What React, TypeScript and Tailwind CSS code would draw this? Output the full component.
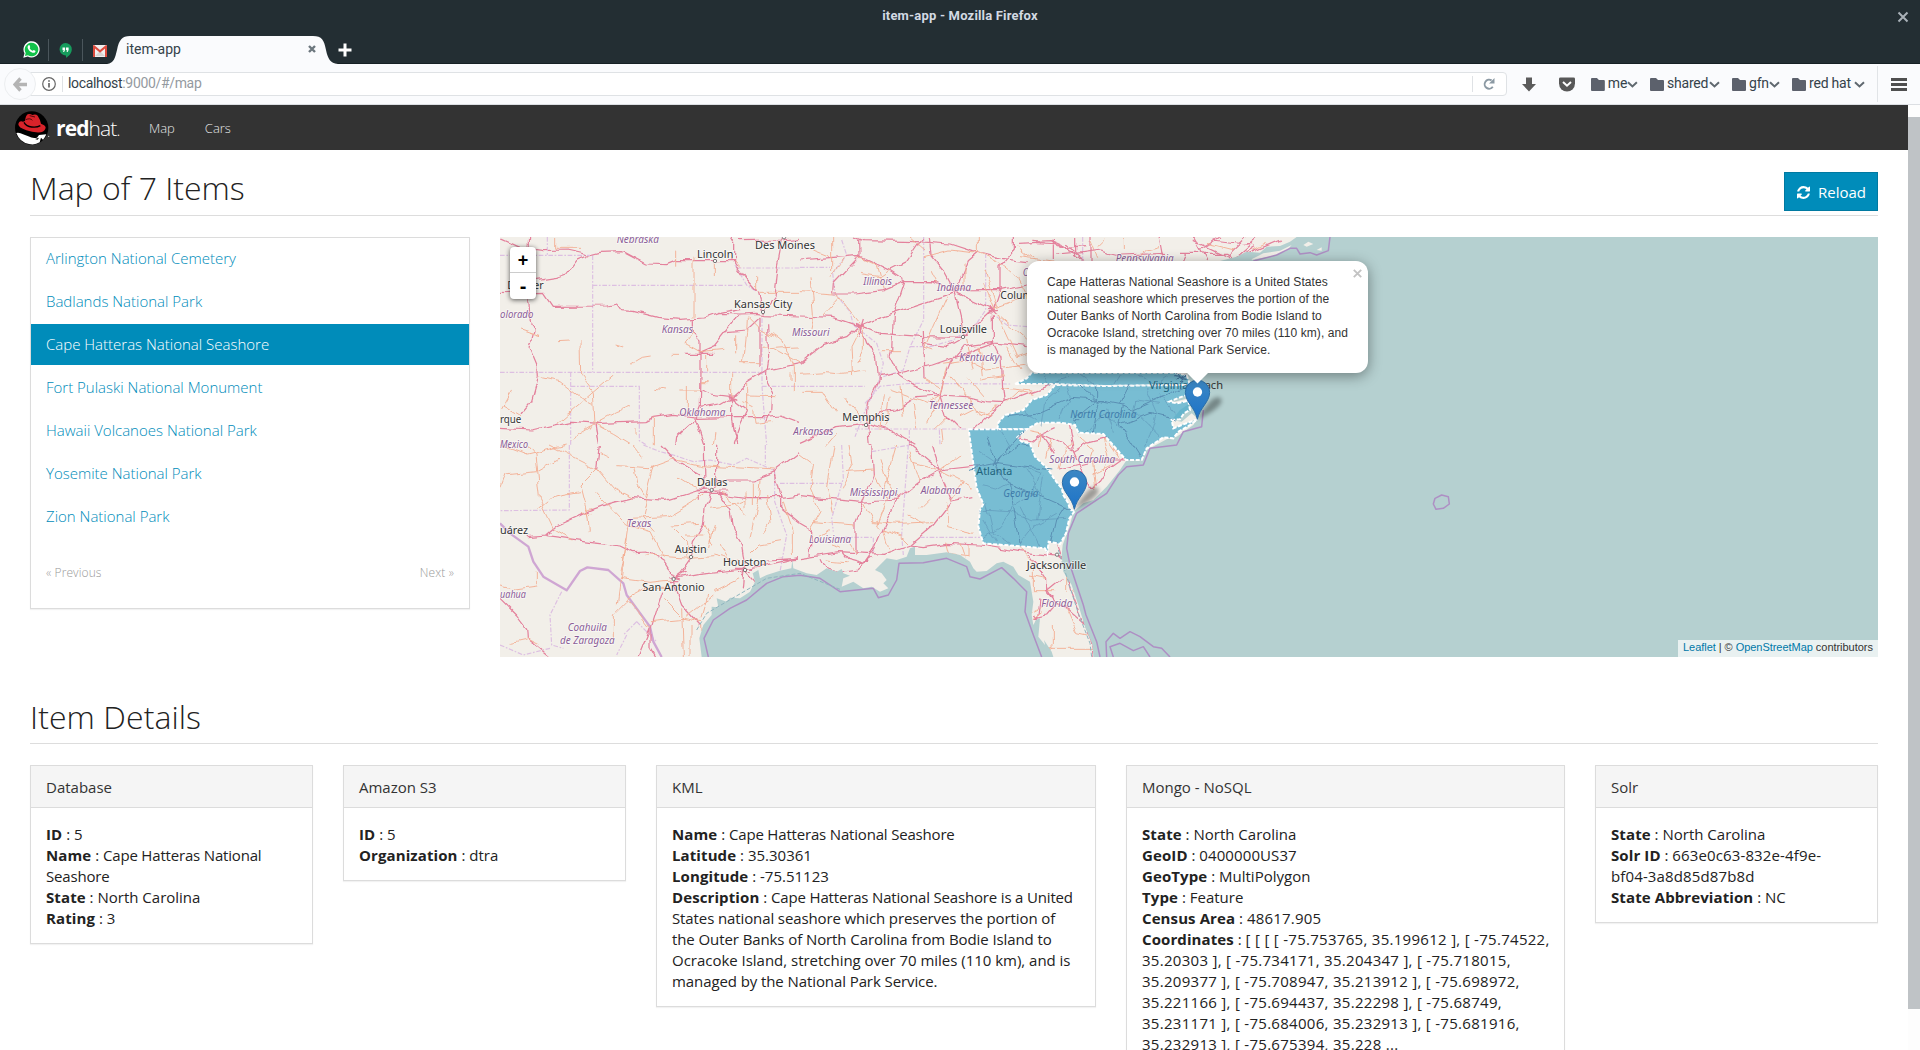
import React from 'react';

/* ---------- browser chrome ---------- */

function WhatsAppIcon() {
  return (
    <svg width="17" height="17" viewBox="0 0 17 17">
      <path d="M0.3 16.7 1.5 12.3A8.1 8.1 0 1 1 4.8 15.5Z" fill="#fff" />
      <path d="M1.9 15.1 2.7 12A6.8 6.8 0 1 1 5 14.3Z" fill="#12c24a" />
      <path d="M5.4 4.4c.5-.5 1-.4 1.200.1l.6 1.500c.1.400-.6.900-.5 1.200.6 1.200 1.500 2 2.800 2.500.4.100.8-.9 1.200-.8l1.600.8c.5.300 0 1.700-.8 2-2.500 1-7-2.700-6.900-5.700 0-.7.400-1.200.8-1.600Z" fill="#fff" />
    </svg>
  );
}

function HangoutsIcon() {
  return (
    <svg width="13" height="15" viewBox="0 0 13 15">
      <path d="M6.500 0a6.300 6.300 0 0 1 6.300 6.200c0 3.800-3 7-5.800 8.600v-2.400A6.200 6.200 0 1 1 6.500 0Z" fill="#169c5d" />
      <path d="M3.500 4.600h2.600v2.500L5.100 9H4l.8-1.800H3.500ZM7 4.600h2.600v2.500L8.600 9H7.500l.8-1.800H7Z" fill="#fff" />
    </svg>
  );
}

function GmailIcon() {
  return (
    <svg width="14" height="12" viewBox="0 0 14 12">
      <rect width="14" height="12" rx="1" fill="#f1efef" />
      <path d="M2 11 7 6l5 5Z" fill="#d8d5d4" />
      <path d="M0 1Q0 0 1 0L7 5 13 0q1 0 1 1v11h-2V3.500L7 7.800 2 3.500V12H0Z" fill="#dd4b3e" />
    </svg>
  );
}

function TitleBar() {
  return (
    <div className="relative flex h-8 w-full items-center justify-center bg-[#232e33] text-[13px] font-bold tracking-[0.180px] text-[#d3dae3]">
      <span>item-app - Mozilla Firefox</span>
      <svg className="absolute right-[11px] top-[11px]" width="12" height="12" viewBox="0 0 12 12">
        <path d="M1.500 1.500 10.500 10.500M10.500 1.500 1.500 10.500" stroke="#a9b1b8" strokeWidth="2" />
      </svg>
    </div>
  );
}

function TabStrip() {
  return (
    <div className="flex h-8 items-start border-b border-[#162024] bg-[#232e33]">
      <div className="flex h-8 w-12 items-center justify-end pr-2 pt-[4px]">
        <div className="pb-0.5"><WhatsAppIcon /></div>
      </div>
      <div className="mt-[7px] flex h-[22px] w-[35px] items-center justify-center border-x border-[#4b565c]">
        <HangoutsIcon />
      </div>
      <div className="ml-[10px] mt-[13px]"><GmailIcon /></div>
      <div className="relative h-8 w-[231px]">
        <svg className="absolute left-0 top-0" width="234" height="32" viewBox="0 0 234 32">
          <path d="M0 32C7 31 8 26 10 18 12 8 15 4 23 4H206C215 4 217 8 219 18 221 27 223 31 231 32Z" fill="#fafbfd" />
        </svg>
        <div className="relative flex items-center pl-[19px] pt-[7px] text-[14px] leading-[20px] text-[#35424a]">
          <span className="w-[182px]">item-app</span>
          <svg width="8" height="8" viewBox="0 0 8 8">
            <path d="M1 1 7 7M7 1 1 7" stroke="#6c777e" strokeWidth="2.400" />
          </svg>
        </div>
      </div>
      <svg className="mt-[11px]" width="14" height="14" viewBox="0 0 14 14">
        <path d="M7 0.500V13.500M0.500 7H13.500" stroke="#fff" strokeWidth="3" />
      </svg>
    </div>
  );
}

function Bookmark({ label, className }: { label: string; className: string }) {
  return (
    <div className={`flex items-center ${className}`}>
      <svg width="14" height="13" viewBox="0 0 14 13">
        <path d="M0 1Q0 0 1 0H6L8 2H13Q14 2 14 3V12Q14 13 13 13H1Q0 13 0 12Z" fill="#5c616c" />
      </svg>
      <span className="ml-[3px] flex-1 whitespace-nowrap pb-[1px] text-[14px] tracking-[-0.200px]">{label}</span>
      <svg width="11" height="7" viewBox="0 0 11 7">
        <path d="M1 1.200 5.500 5.400 10 1.200" fill="none" stroke="#5f686f" strokeWidth="2" />
      </svg>
    </div>
  );
}

function Toolbar() {
  return (
    <div className="flex h-[41px] items-center border-b border-[#dcdfe3] bg-[#fafbfd] pl-1 text-[#35424a]">
      <div className="z-10 flex h-8 w-8 shrink-0 items-center justify-center rounded-full border border-[#eceef0] bg-[#fafbfd]">
        <svg width="14" height="15" viewBox="0 0 14 15">
          <path d="M7.500 1.500 2 7.500 7.500 13.500M2 7.500H14" fill="none" stroke="#b4b4b4" strokeWidth="3.400" />
        </svg>
      </div>
      <div className="-ml-[9px] flex h-6 w-[1480px] items-center rounded-r-sm border border-[#dfe2e5] bg-white pl-[14px]">
        <svg width="14" height="14" viewBox="0 0 14 14">
          <circle cx="7" cy="7" r="6.300" fill="none" stroke="#666" strokeWidth="1.200" />
          <path d="M7 6V10.500M7 3.200V4.700" stroke="#666" strokeWidth="1.700" />
        </svg>
        <div className="ml-[6px] h-4 border-l border-[#dfe2e5]" />
        <span className="ml-[5px] pb-px text-[14px] tracking-[-0.330px]">
          localhost<span className="text-[#949a9f]">:9000/#/map</span>
        </span>
        <div className="ml-auto h-4 border-l border-[#dfe2e5]" />
        <svg className="ml-[10px] mr-[11px]" width="12" height="12" viewBox="0 0 12 12">
          <path d="M8.600 2.400A4.500 4.500 0 1 0 9.800 8.800" fill="none" stroke="#8b99a3" strokeWidth="1.900" />
          <path d="M11.500 0V5.500H6Z" fill="#8b99a3" />
        </svg>
      </div>
      <svg className="ml-[14px]" width="16" height="15" viewBox="0 0 16 15">
        <path d="M5 0.500H11V7H15L8 14.500 1 7H5Z" fill="#5b5b5b" />
      </svg>
      <svg className="ml-[22px]" width="16" height="15" viewBox="0 0 16 15">
        <path d="M0 1.500Q0 .5 1.500 .5H14.500Q16 .5 16 1.500V6.500A8 8 0 0 1 0 6.500Z" fill="#585858" />
        <path d="M4 5 8 8.700 12 5" fill="none" stroke="#fff" strokeWidth="2" />
      </svg>
      <Bookmark label="me" className="ml-4 w-[47px]" />
      <Bookmark label="shared" className="ml-3 w-[70px]" />
      <Bookmark label="gfn" className="ml-3 w-[48px]" />
      <Bookmark label="red hat" className="ml-3 w-[73px]" />
      <div className="ml-3 h-9 border-l border-[#e1e4e7]" />
      <svg className="ml-[13px]" width="16" height="13" viewBox="0 0 16 13">
        <path d="M0 1.500H16M0 6.500H16M0 11.500H16" stroke="#4f4f4f" strokeWidth="3" />
      </svg>
    </div>
  );
}

/* ---------- application navbar ---------- */

function RedHatLogo() {
  return (
    <svg width="35" height="34" viewBox="0 0 105 102">
      <circle cx="50" cy="51" r="50" fill="#000" />
      <path d="M4 66Q14 64 24 70L40 76Q54 84 66 80L72 72 94 70Q90 80 84 86L78 80 74 94Q60 103 42 99Q14 94 4 66Z" fill="#fff" />
      <path d="M50 70 70 70 66 76 56 76ZM60 84 72 80 68 86Z" fill="#000" />
      <path d="M30 30Q32 14 38 10Q46 8 52 12Q62 8 68 14Q76 26 78 38Q90 42 92 48Q92 60 78 64Q56 66 34 58Q10 50 10 40Q12 28 24 32Z" fill="#d8232a" />
      <path d="M27 34Q34 46 50 48Q66 50 76 44" fill="none" stroke="#000" strokeWidth="4" />
      <path d="M32 26Q46 20 52 28M44 14 60 18" fill="none" stroke="#3a0505" strokeWidth="2.500" />
      <circle cx="101" cy="76" r="2" fill="#ccc" />
    </svg>
  );
}

function NavBar() {
  return (
    <nav className="flex h-[45px] items-center bg-[#333] pl-[15px] text-[13px] font-light text-[#e8e8e8]">
      <RedHatLogo />
      <span className="ml-[6px] w-[64px] pt-px text-[21px] leading-none tracking-[-0.900px] text-white">
        <b className="font-bold">red</b>hat<span className="text-[16px]">.</span>
      </span>
      <a className="ml-[29px] pt-[2px]">Map</a>
      <a className="ml-[30px] pt-[2px]">Cars</a>
    </nav>
  );
}

/* ---------- map ---------- */

const PINK = '#e4819c';
const ORANGE = '#f3ae93';

const Roads = ({ d, minor }: { d: string; minor?: boolean }) => (
  <path d={d} fill="none" stroke={minor ? ORANGE : PINK} strokeWidth={minor ? 2.8 : 3.7} strokeLinejoin="round" filter="url(#wander)" />
);
const Border = ({ d }: { d: string }) => (
  <path d={d} fill="none" stroke="#ddbfe2" strokeWidth="3.500" strokeDasharray="14 5 5 5" />
);
const Coast = ({ d }: { d: string }) => (
  <path d={d} fill="none" stroke="#ae8fc4" strokeWidth="4.500" strokeLinejoin="round" />
);

const GEORGIA =
  'M26 208 200 208 172 232 185 245 210 250 225 290 262 325 285 360 305 385 310 405 325 430 330 450 345 452 328 475 318 520 300 552 266 545 262 580 255 565 70 550 55 500 60 450 70 432 50 385Z';
const NORTH_CAROLINA =
  'M112 208 115 188 135 165 190 150 215 120 260 105 285 75 430 78 680 75 690 102 660 112 628 125 650 130 685 122 690 150 672 160 660 178 635 180 640 205 665 195 712 178 690 195 655 215 640 235 610 232 560 265 545 300 498 300 430 222 355 218 345 195 300 188 235 188 200 208Z';
const VIRGINIA = 'M165 72 200 55 215 38 640 38 680 45 690 75 430 78 285 72Z';

type Label = [string, number, number, number];

const cities: Label[] = [
  ['Lincoln', 591, 83, 109],
  ['Des Moines', 765, 57, 180],
  ['Denver', 22, 177, 109],
  ['Kansas City', 702, 235, 175],
  ['Columbus', 1501, 207, 150],
  ['Louisville', 1319, 308, 142],
  ['Memphis', 1027, 573, 141],
  ['rque', 0, 578, 64],
  ['uárez', 0, 911, 84],
  ['Dallas', 591, 769, 91],
  ['Austin', 524, 969, 96],
  ['Houston', 669, 1008, 130],
  ['San Antonio', 427, 1083, 187],
  ['Jacksonville', 1580, 1016, 179],
];

const regions: Label[] = [
  ['Nebraska', 350, 39, 127],
  ['olorado', 0, 264, 100],
  ['Kansas', 485, 308, 94],
  ['Missouri', 876, 318, 113],
  ['Illinois', 1090, 164, 86],
  ['Indiana', 1311, 184, 102],
  ['Ohio', 1568, 138, 60],
  ['Pennsylvania', 1847, 96, 174],
  ['Kentucky', 1378, 394, 120],
  ['Tennessee', 1286, 536, 134],
  ['Oklahoma', 538, 558, 138],
  ['Arkansas', 880, 614, 120],
  ['Mexico', 0, 653, 84],
  ['Texas', 381, 892, 73],
  ['uahua', 0, 1105, 78],
  ['Coahuila', 203, 1203, 118],
  ['de Zaragoza', 180, 1241, 164],
  ['Mississippi', 1049, 797, 143],
  ['Alabama', 1262, 791, 120],
  ['Louisiana', 927, 939, 126],
  ['Florida', 1624, 1132, 93],
  ['South Carolina', 1648, 699, 198],
];

const tintedRegions: Label[] = [
  ['North Carolina', 1711, 563, 198],
  ['Georgia', 1510, 800, 105],
];

function MapText({ items, color, italic }: { items: Label[]; color: string; italic?: boolean }) {
  return (
    <g
      fill={color}
      fontSize={italic ? 32 : 35}
      fontStyle={italic ? 'italic' : 'normal'}
      stroke="#fff"
      strokeOpacity="0.6"
      strokeWidth="5"
      strokeLinejoin="round"
      paintOrder="stroke"
    >
      {items.map(([name, x, y, w]) => (
        <text key={name} x={x} y={y} textLength={w} lengthAdjust="spacingAndGlyphs">
          {name}
        </text>
      ))}
    </g>
  );
}

function Pin() {
  return (
    <g>
      <path d="M343 448Q358 418 388 388Q412 374 416 392Q412 416 343 448Z" fill="#000" opacity="0.350" filter="url(#soft)" />
      <path d="M343 448C336 412 307 396 307 367A36.500 36.500 0 0 1 380 367C380 396 351 412 343 448Z" fill="url(#pin)" stroke="#2b6ea8" strokeWidth="3" />
      <circle cx="343.500" cy="366" r="14" fill="#fff" />
    </g>
  );
}

function MapCanvas() {
  return (
    <svg className="block h-[420px] w-[1378px]" viewBox="0 21 4134 1260" fontFamily='"Noto Sans", "Open Sans", sans-serif'>
      <defs>
        <linearGradient id="pin" x1="0" y1="0" x2="0" y2="1">
          <stop offset="0" stopColor="#3c88c4" />
          <stop offset="1" stopColor="#1c72c8" />
        </linearGradient>
        <filter id="soft" x="-50%" y="-50%" width="200%" height="200%">
          <feGaussianBlur stdDeviation="6" />
        </filter>
        <filter id="wander" x="-2%" y="-2%" width="104%" height="104%">
          <feTurbulence type="fractalNoise" baseFrequency="0.022" numOctaves="2" seed="4" />
          <feDisplacementMap in="SourceGraphic" scale="24" xChannelSelector="R" yChannelSelector="G" />
        </filter>
      </defs>
      <rect y="21" width="4134" height="1260" fill="#f2efe9" />

      {/* Midwest and the plains */}
      <Border d="M0 76H270M142 21V76M278 76V427M278 166H730M0 427H795M212 427V645M212 469H418V632L440 645M786 265V465M705 105 740 165 770 185M710 114H900M786 469H900M786 469 800 645" />
      <Roads d="M0 25 60 52 130 62 200 60 268 75 300 67 370 65 440 102 500 104 530 92 704 92 M268 75 230 92 200 132 170 142 108 152 M86 21 84 60 M0 190 60 192 133 190 160 229 320 228 347 222 362 242 400 244 470 262 540 268 610 264 650 250 715 252 770 250 790 254 900 258 M690 21 704 45 704 100 740 150 772 186 790 250 M720 32 850 30 900 25 M850 30 835 110 825 200 790 246 M86 205 90 270 103 300 90 350 113 405 115 440 95 512 60 555 M580 265 580 310 600 330 600 430 598 530 580 575 530 620 527 645 M600 367 640 350 715 255 M680 305 740 300 780 262 M780 260 780 410 M803 280 806 395 800 430 800 460 815 490 812 545 800 575 M0 595 97 600 170 584 215 574 300 580 435 575 460 562 520 553 590 562 690 560 800 560 840 555 900 577 M288 580 298 645 M695 500 630 492 600 480 M695 500 740 460 800 422 900 400 M695 505 660 525 600 535 M695 505 740 540 M695 505 695 575 710 645 M740 540 720 580 697 645 M585 562 612 645 M550 370 640 370 M655 248 720 235 M685 492 710 492M685 500 712 508M690 490V512M594 360 610 370" />
      <Roads minor d="M170 21V55H240 M530 68V110 M582 80V260 M643 95V138 M704 92 720 110 M770 140V180 M772 187H900 M240 330 242 440 280 490 285 580 M340 435 170 580 M115 440 180 455 245 505 280 523 M290 578 350 545 390 530 M285 580 340 610 390 640 M285 582 215 625 M60 300 120 320 M395 403 430 382 455 378 M535 480H600 M562 465V540 M742 260 740 310 730 400 M745 260 785 300 825 320 850 340 880 410 880 485 M785 355 850 350 900 348 M720 398H780 M600 365 670 358 M620 370V430 M555 340 600 365 M580 310 555 340 M710 310V370 M740 460V540 M740 498 830 500 M695 430V500 M640 645 645 610 M460 562V640 M5 540 35 485 M10 530 60 560 M405 595V620 M350 342 370 348M170 338 210 336M460 475 495 480M820 355 900 400 M870 430V450 M600 455 620 455 M515 373 540 373 M730 515 760 530 765 580 820 575" />

      {/* Ohio valley, Tennessee, Missouri */}
      <g transform="translate(900 0)">
        <Border d="M0 112H90M125 30 140 75 98 130 105 190 150 245 160 285 230 340 250 400 235 460 200 530 165 620M371 21V270L330 350 310 420 250 440M0 469H195M195 520 240 469 330 460 635 462M165 597H680M328 600V645M418 600 420 645M557 70V240L530 280M330 350 390 350 460 330 530 280M590 260 620 285 685 290M848 21V93" />
        <Roads d="M165 21 190 32 350 35 450 42 520 65 600 85 680 95 M179 30 180 80 100 165 98 190 M0 90 60 85 130 80 175 77 230 102 270 122 318 154 400 156 465 185 M370 21 320 95 270 120 M385 21 390 70 430 120 465 185 M0 258 100 262 180 290 250 260 370 220 465 188 M100 192 160 192 250 182 318 154 410 155 M318 154 300 210 280 260 275 360 270 380 M180 285 140 320 75 340 30 375 0 400 M180 290 200 345 230 380 235 450 205 520 200 580 M180 285 240 310 370 320 490 322 580 240 M465 188 480 250 490 322 M490 322 440 350 370 340 M490 350 575 338 680 350 M465 188 580 240 M535 70 505 95 470 185 M580 240 600 180 600 110 640 60 640 21 M465 180 600 178 680 162 M580 250 580 340 600 380 605 470 610 518 M235 440 290 430 400 405 500 370 580 340 M295 430 270 380 M290 430 335 460 420 495 M490 350 450 400 430 450 420 495 M420 495 500 500 560 515 610 518 680 490 760 462 M420 495 350 500 290 540 240 545 200 580 M420 495 440 560 480 600 M610 518 560 560 520 598 M200 580 270 600 340 640 M200 580 110 590 45 620 0 640 M200 580 205 645 M370 300 375 445 M190 270 175 320M165 280 205 295M570 230 590 250M565 242 595 238M450 190H480M485 320 505 315M760 30V90M765 45 800 55 860 50 M768 75 820 70 M700 40 780 45 M790 40 850 90" />
        <Roads minor d="M95 21V120 M30 145 40 250 30 300 M0 185 100 192 M110 190 140 230 180 280 M130 85 90 140 M70 260 120 205 M175 80 230 105 M180 130 240 140 270 120 M0 430 80 425 130 430 200 420 M180 290 150 350 155 440 M190 290 190 360 170 400 M245 362H300 M270 362 M375 80 450 60 535 70 M535 70 600 100 650 140 680 200 M535 70 535 21 M375 60 330 21 M390 120 410 160 M440 200 400 290 375 350 M495 100V180 M555 120 590 230 M550 160 580 235 680 200 M600 260 680 330 M590 250 650 380 680 370 M430 400 500 390 560 420 680 405 M500 330 520 420 M540 350 550 440 M440 410 420 490 M620 350 660 420 M375 445 420 470 M300 470 310 560 M250 490 240 600 M270 480 380 520 420 495 M420 500 380 580 M450 440 500 500 M500 440 560 510 M505 500 540 560 590 530 M540 450 610 440 M620 518 660 480 700 490 M600 470 700 480 M10 490 70 490 110 550 M130 500 180 560 M80 645 110 610 M270 500 260 590 M340 520 350 595 M425 600 430 645 M370 350 400 360 M230 105 250 180 M40 60 90 80 M650 50 700 90 M870 30 890 80 M440 560 400 600M480 560 520 540 570 555" />
      </g>

      {/* Texas and northern Mexico */}
      <g transform="translate(0 645)">
        <Border d="M208 0V195L0 197M430 0 480 20 520 30 580 50 630 45 700 60 740 40 820 75M824 80V170L860 270 840 380M840 115H900M796 0V60M185 440 150 510 155 600 190 610M0 600 70 630 150 610M380 570 350 630M410 530 370 570M410 530 470 590" />
        <path d="M0 235 30 265 85 305 100 350 130 395 200 436 240 378 262 367 325 375 370 415 380 450 450 545 460 590 485 636" fill="none" stroke="#cfa6d3" strokeWidth="7" strokeLinejoin="round" />
        <Roads d="M298 0 290 70 M80 275 140 270 175 240 250 205 330 175 400 158 500 166 590 138 635 135 M140 272 275 290 360 300 400 320 440 318 495 355 520 395 M610 0 612 130 M635 135 615 190 610 240 580 290 575 335 540 385 520 400 M650 0V110L635 135 M635 135 680 150 740 158 840 158 900 150 M640 105H760L820 82 900 20 M650 140 690 200 700 260 725 300 735 370 M520 400 600 385 735 372 820 355 900 338 M520 400 555 380 M520 410 545 480 600 540 M485 440 450 550 415 636 M735 375 730 430 M735 375 770 415 M800 345 900 340 M0 460 50 510 80 550 82 580 150 636 M845 150 845 190 900 235 M824 80 842 150 M450 550V610L465 636 M480 0 520 42 600 90 M590 135H685M595 145H680M595 150V170M505 395 540 405M510 410H535M705 370H760M715 380H755M730 365V390" />
        <Roads minor d="M0 0 80 30 200 0 M80 0 105 30 118 160 160 250 220 285 M0 130 15 90 110 80 180 40 M290 70 340 130 400 160 M290 70 240 120 260 200 265 260 M240 140 160 155 118 190 M150 0 290 70 M400 60 410 110 440 160 430 210 M290 145 380 240 450 260 490 340 M360 400 380 290 390 220 500 215 610 150 M355 62 450 68 520 42 M520 42 600 62 824 75 M535 95 590 130 M460 60 436 155 M355 475 380 280 M360 400 450 412 515 405 M515 240 600 235 M520 250 560 290 560 335 M440 330 570 340 640 335 M610 240 640 300 M640 240 625 310 M630 190 700 180 735 165 M735 145V190 M780 100 775 170 750 280 M800 150 810 230 790 260 M760 110V180 M640 450 550 520 450 530 M640 440 720 400 M620 450 600 520 M545 490 550 636 M570 540V636 M605 540 610 636 M450 545 385 460 440 430 500 430 M340 510 400 450 M340 580 340 510 M0 420 40 430 115 420 M115 420V380 M35 595 80 585 M80 580 120 600 M490 460 550 520 600 530 M400 0 430 40M850 170 880 260 880 330M750 330 780 300 840 290M640 330 720 350M560 270H610M300 20 330 35M420 215 460 260 M260 195 280 190M240 205 280 205M255 190 265 215M660 300 690 350M660 140 740 210" />
      </g>

      {/* Deep south and Florida */}
      <g transform="translate(900 645)">
        <Border d="M0 115H125M125 0 130 100 95 220 100 260M105 277H220V320M325 0 305 270 310 330M360 277H540M215 20 330 0" />
        <Roads d="M0 152 90 163 185 172 240 168 290 165 360 110 420 75 M215 0 220 90 190 172 165 230 165 330 M420 75 395 0 M330 0 420 75 M420 75 540 62 M420 80 455 170 400 240 330 300 M290 165 250 250 220 320 195 355 M455 168 520 155 M0 235 35 255 30 330 M0 338 120 320 250 328 330 300 370 305 440 295 540 300 660 320 780 335 M60 340 75 370 120 382 170 375 195 355 215 340 M125 320 140 340 195 355 M770 290 790 350 815 440 850 530 875 590 880 636 M690 330 740 400 740 440 770 475 740 510 700 520 M770 475 800 490 855 540 M740 440 790 400 M415 65 430 85M410 80 435 72M175 355H205M740 430 760 460 M35 250V270M720 460 710 540M770 330 790 345 M700 510 720 530" />
        <Roads minor d="M0 30 40 60 30 130 60 200 30 250 M100 0 80 120 100 200 M130 80 220 75 M150 0 160 60 130 130 M220 90 260 160 230 240 240 250 M190 175 220 230 300 235 400 230 M240 40 260 110 300 165 M290 0 270 70 250 130 M250 255 310 280 330 300 M330 20 360 110 M340 55 420 75 480 30 M420 75 490 110 450 165 M360 190 390 160 M440 170 440 245 520 265 M480 110 520 130 M320 210 370 235 M165 240 100 235 40 230 M170 330 150 300 M250 255 270 320 M440 290 450 330 510 335 510 300 M480 295 495 340 M660 310 700 350 700 440 M700 440H770 M690 390 740 400 M690 500 750 470 M760 540 760 600 730 636 M755 610 880 610 M800 490 830 560 875 570 M700 600 760 610 M800 390V440 M700 520 725 500 M840 400 820 440M90 260 60 280M120 310 90 300M80 345 140 350" />
      </g>
      <g transform="translate(1380 390)">
        <Roads d="M240 222 220 240 175 230M240 222 290 200 M240 222 340 270 390 385 405 385 M340 270 325 190 M340 275 380 250 440 235 M300 330 420 300 500 300 M405 385 440 330 490 295 M240 222 280 280" />
        <Roads minor d="M205 215 240 222 235 260 M270 240 260 290 M350 225 400 270 390 300 M430 240 445 290 430 330 M400 300 410 385 M400 340 460 310 M300 330 310 280 340 250 M345 370 375 380 M445 250 480 300 M320 390 350 420" />
      </g>

      {/* Northeast corridor */}
      <g transform="translate(1560 0)">
        <Roads d="M0 40 90 35 170 70 240 60 300 75 440 70 M170 21V80L200 93 M210 21V93 M480 70H620L650 90 M515 30 600 70 640 90 720 21 M520 21 560 93 M620 80 680 21 M640 90 780 30 M540 60 600 21 M490 93 500 70M420 21 430 75M580 30 700 45M650 85 705 50" />
        <Roads minor d="M310 21V60 M0 80 100 93 M230 50 250 30 M340 93 380 60 420 50 M560 40 640 60 M700 60 740 40" />
      </g>

      {/* Water */}
      <path
        fill="#b5d0d0"
        d="M605 1281 598 1225 610 1185 635 1155 635 1130 655 1132 650 1105 680 1115 690 1103 720 1105 750 1085 765 1055 758 1030 775 1020 780 1045 800 1035 840 1022 874 1015 877 990 880 1015 900 1022 920 1030 950 1035 980 1015 1010 1025 1025 1017 1030 1030 1050 1037 1030 1045 1025 1070 1060 1055 1090 1075 1115 1070 1140 1085 1165 1075 1150 1060 1160 1050 1145 1030 1125 1020 1145 1000 1160 985 1190 990 1220 980 1230 955 1245 950 1245 975 1280 975 1340 967 1380 975 1410 995 1420 1015 1430 1025 1460 1023 1490 1000 1510 995 1540 1010 1555 1035 1590 1055 1595 1085 1600 1115 1595 1155 1600 1185 1608 1170 1620 1165 1615 1220 1635 1245 1632 1230 1655 1265 1660 1281Z"
      />
      <path
        fill="#b5d0d0"
        d="M1780 1281 1778 1245 1755 1190 1735 1125 1715 1065 1690 1025 1685 975 1688 945 1710 885 1720 845 1750 820 1780 810 1820 770 1860 720 1880 690 1925 690 1940 660 2000 628 2030 620 2080 585 2092 565 2075 550 2045 575 2015 570 2040 540 2070 520 2065 505 2008 520 2020 508 2070 490 2060 450 2060 430 2060 250 2160 93 2210 80 2240 65 2280 68 2300 50 2340 48 2370 35 2390 21 4134 21 4134 1281Z"
      />
      <path d="M2250 90 2290 70 2340 62 2375 45 2360 62 2320 78ZM2410 45 2425 35 2440 42 2420 50ZM2450 60 2465 52 2465 62Z" fill="#f2efe9" />
      <Coast d="M625 1281 612 1225 640 1170 690 1135 740 1110 800 1060 850 1040 900 1036 960 1045 1020 1085 1120 1075 1135 1103 1165 1095 1190 1050 1197 1000 1270 998 1340 985 1400 1010 1410 1040 1440 1047 1505 1013 1540 1045 1580 1085 1575 1145 1600 1215 1625 1281" />
      <Coast d="M1800 1281 1790 1235 1758 1155 1750 1125 1710 1005 1700 955 1705 910 1730 850 1820 790 1855 735 1880 710 1930 705 1950 655 2030 645 2050 605 2105 590 2110 540" />
      <Coast d="M2260 93 2330 75 2370 55 2390 55 2400 72 2430 68 2450 75 2485 62 2490 21" />
      <Coast d="M2800 822 2805 805 2825 795 2845 800 2848 822 2830 835 2808 838Z" />
      <Coast d="M1820 1281 1818 1235 1840 1210 1860 1225 1890 1205 1920 1220 1960 1250 1985 1255 2010 1281M1840 1281 1830 1250 1860 1240 1900 1262 1930 1250 1950 1281" />
      <path d="M1675 960 1700 1040 1735 1150 1770 1240 1775 1281M590 1200 620 1150 800 1045 900 1030 1020 1078" fill="none" stroke="#8fb5bf" strokeWidth="3" strokeDasharray="12 6" />

      <MapText items={cities} color="#333" />
      <MapText items={regions} color="#8b5d96" italic />

      {/* State overlays and their pins */}
      <g transform="translate(1380 390)">
        <g fill="#48a9ca" fillOpacity="0.720" stroke="#fff" strokeWidth="6" strokeDasharray="12 5">
          <path d={VIRGINIA} />
          <path d={NORTH_CAROLINA} />
          <path d={GEORGIA} />
        </g>
        <g fill="none" stroke="#5a8fb3" strokeWidth="3" filter="url(#wander)">
          <path d="M30 325 105 310 180 320 280 330M105 310 80 230M105 310 180 250 210 255M105 310 145 370 160 440 180 550M110 305 190 215M145 372 220 400 300 435 330 450M315 440 290 480 275 545M350 188 340 180 355 165 410 120 490 135 520 150 690 75M410 120 330 115 230 160 140 170M410 120 360 72M415 125 400 215M490 135 480 195 540 290M480 195 570 160 650 180M410 80V130M480 130 510 72M98 300H115M98 312H115M100 300V318M340 182H358M395 112 425 130M390 122H430" />
          <path d="M60 450 150 455 220 480 320 475M70 530 120 500 160 440 220 400 240 340 180 320M60 380 110 390 145 370M180 550 220 500 290 460M200 330 250 410M120 210 150 260M180 440 240 560M70 480 110 550M80 430 100 520 150 550M240 200 250 130 300 85M300 180 330 110 320 75M440 140 460 215M520 150 600 230M560 90 590 160 560 260M600 100 640 160M380 215 430 160 500 220M520 170 530 120 600 130M250 45 270 70 330 50M360 42 400 72M480 42 460 75M540 45 580 72 620 45M250 350 230 480M60 280 105 310M200 150 230 180" strokeOpacity="0.650" strokeWidth="2.500" />
          <path d="M640 50 680 55M650 42 670 65M645 60 675 45" stroke="#46749f" strokeWidth="4" />
        </g>
      </g>
      <g fontSize="35">
        <text x="1429" y="735" textLength="108" lengthAdjust="spacingAndGlyphs" fill="#1f637c">Atlanta</text>
        <text x="1947" y="476" textLength="222" lengthAdjust="spacingAndGlyphs" fill="#1f637c">
          Virginia<tspan fill="#333"> Beach</tspan>
        </text>
      </g>
      <g fill="#3f7cab" fontSize="32" fontStyle="italic">
        {tintedRegions.map(([name, x, y, w]) => (
          <text key={name} x={x} y={y} textLength={w} lengthAdjust="spacingAndGlyphs">{name}</text>
        ))}
      </g>
      <g transform="translate(1380 390)">
        <Pin />
        <g transform="translate(369 -270)"><Pin /></g>
      </g>

      <g fill="#f8f8f8" stroke="#777" strokeWidth="3">
        <circle cx="645" cy="93" r="5" />
        <circle cx="789" cy="246" r="5" />
        <circle cx="852" cy="22" r="5" />
        <circle cx="1389" cy="321" r="5" />
        <circle cx="1098" cy="585" r="5" />
        <circle cx="635" cy="780" r="5" />
        <circle cx="573" cy="981" r="5" />
        <circle cx="735" cy="1020" r="5" />
        <circle cx="521" cy="1047" r="5" />
        <circle cx="1671" cy="974" r="5" />
      </g>
    </svg>
  );
}

function MapView() {
  return (
    <div className="relative h-[420px] w-[1378px] overflow-hidden font-['Liberation_Sans',Arial,sans-serif]">
      <MapCanvas />
      <div className="absolute left-[10px] top-[10px] w-[26px] rounded bg-white text-center text-[18px] font-bold leading-[26px] text-black shadow-[0_1px_5px_rgba(0,0,0,0.65)]">
        <div className="h-[26px] border-b border-[#ccc]">+</div>
        <div className="h-[26px] text-[20px]">-</div>
      </div>
      <div className="absolute left-[527px] top-[24px] h-[112px] w-[341px]">
        <div className="relative h-full whitespace-nowrap rounded-xl bg-white px-5 py-[13px] text-[12px] leading-[17px] tracking-[0.080px] text-[#333] shadow-[0_3px_14px_rgba(0,0,0,0.4)]">
          Cape Hatteras National Seashore is a United States<br />
          national seashore which preserves the portion of the<br />
          Outer Banks of North Carolina from Bodie Island to<br />
          Ocracoke Island, stretching over 70 miles (110 km), and<br />
          is managed by the National Park Service.
          <svg className="absolute right-[6px] top-[8px]" width="9" height="9" viewBox="0 0 9 9">
            <path d="M0.800 0.800 8.200 8.200M8.200 0.800 0.800 8.200" stroke="#c3c3c3" strokeWidth="1.900" />
          </svg>
        </div>
        <div className="absolute bottom-[-7px] left-[162px] h-[17px] w-[17px] rotate-45 bg-white" />
      </div>
      <div className="absolute bottom-0 right-0 h-[17px] w-[200px] whitespace-nowrap bg-white/70 px-[5px] text-[11px] leading-[15px] tracking-[-0.040px] text-[#333]">
        <a className="text-[#0078a8]">Leaflet</a> | © <a className="text-[#0078a8]">OpenStreetMap</a> contributors
      </div>
    </div>
  );
}

/* ---------- page ---------- */

const parks = [
  'Arlington National Cemetery',
  'Badlands National Park',
  'Cape Hatteras National Seashore',
  'Fort Pulaski National Monument',
  'Hawaii Volcanoes National Park',
  'Yosemite National Park',
  'Zion National Park',
];

function ParkList() {
  return (
    <div className="h-[372px] w-[440px] border border-[#dcdcdc] bg-white shadow-[0_1px_1px_rgba(0,0,0,0.05)]">
      <ul className="flex flex-col gap-0.5">
        {parks.map((park) => (
          <li
            key={park}
            className={
              park.startsWith('Cape')
                ? 'h-[41px] bg-[#008cba] px-[15px] py-[10px] font-light text-white'
                : 'h-[41px] px-[15px] py-[10px] font-light text-[#008cba]'
            }
          >
            {park}
          </li>
        ))}
      </ul>
      <div className="mt-[25px] flex justify-between px-[15px] text-[12px] font-light text-[#999]">
        <span className="tracking-[0.100px]">« Previous</span>
        <span className="tracking-[0.100px]">Next »</span>
      </div>
    </div>
  );
}

function Card({ title, rows, className }: { title: string; rows: [string, React.ReactNode][]; className: string }) {
  return (
    <section className={`border border-[#dcdcdc] bg-white shadow-[0_1px_1px_rgba(0,0,0,0.05)] ${className}`}>
      <h2 className="h-[42px] border-b border-[#dcdcdc] bg-[#f5f5f5] px-[15px] py-[11px] text-[#333]">{title}</h2>
      <div className="px-[15px] pb-[14px] pt-4">
        {rows.map(([name, value]) => (
          <div key={name}>
            <b className="font-bold tracking-[0.100px]">{name}</b> : {value}
          </div>
        ))}
      </div>
    </section>
  );
}

const seashore = <span className="tracking-[-0.180px]">Cape Hatteras National Seashore</span>;

function Details() {
  return (
    <div className="mt-[21px] flex items-start gap-[30px]">
      <Card
        title="Database"
        className="w-[283px]"
        rows={[['ID', '5'], ['Name', seashore], ['State', 'North Carolina'], ['Rating', '3']]}
      />
      <Card title="Amazon S3" className="w-[283px]" rows={[['ID', '5'], ['Organization', 'dtra']]} />
      <Card
        title="KML"
        className="w-[440px]"
        rows={[
          ['Name', seashore],
          ['Latitude', '35.30361'],
          ['Longitude', '-75.51123'],
          [
            'Description',
            <>
              <span className="tracking-[-0.170px]">Cape Hatteras National Seashore is a United</span><br />
              <span className="tracking-[-0.110px]">States national seashore which preserves the portion of</span><br />
              <span className="tracking-[-0.090px]">the Outer Banks of North Carolina from Bodie Island to</span><br />
              <span className="tracking-[-0.020px]">Ocracoke Island, stretching over 70 miles (110 km), and is</span><br />
              <span className="tracking-[-0.090px]">managed by the National Park Service.</span>
            </>,
          ],
        ]}
      />
      <Card
        title="Mongo - NoSQL"
        className="w-[439px] whitespace-nowrap"
        rows={[
          ['State', 'North Carolina'],
          ['GeoID', <span className="tracking-[0.100px]">0400000US37</span>],
          ['GeoType', 'MultiPolygon'],
          ['Type', 'Feature'],
          ['Census Area', <span className="tracking-[0.200px]">48617.905</span>],
          [
            'Coordinates',
            <span className="tracking-[0.290px]">
              [ [ [ [ -75.753765, 35.199612 ], [ -75.74522,<br />
              35.20303 ], [ -75.734171, 35.204347 ], [ -75.718015,<br />
              35.209377 ], [ -75.708947, 35.213912 ], [ -75.698972,<br />
              35.221166 ], [ -75.694437, 35.22298 ], [ -75.68749,<br />
              35.231171 ], [ -75.684006, 35.232913 ], [ -75.681916,<br />
              35.232913 ], [ -75.675394, 35.228 ...
            </span>,
          ],
        ]}
      />
      <Card
        title="Solr"
        className="w-[283px]"
        rows={[
          ['State', 'North Carolina'],
          ['Solr ID', <span className="tracking-[0.130px]">663e0c63-832e-4f9e-<br />bf04-3a8d85d87b8d</span>],
          ['State Abbreviation', 'NC'],
        ]}
      />
    </div>
  );
}

function ReloadButton() {
  return (
    <button className="flex h-[39px] w-[94px] items-center border border-[#0079a1] bg-[#008cba] pl-3 text-white">
      <svg className="mt-[2px]" width="13" height="13" viewBox="0 0 1536 1536" fill="#fff">
        <path d="M1511 928q0 5-1 7-64 268-268 434.500t-478 166.500q-146 0-282.500-55t-243.500-157l-129 129q-19 19-45 19t-45-19-19-45v-448q0-26 19-45t45-19h448q26 0 45 19t19 45-19 45l-137 137q71 66 161 102t187 36q134 0 250-65t186-179q11-17 53-117 8-23 30-23h192q13 0 22.500 9.500t9.500 22.500zm25-800v448q0 26-19 45t-45 19h-448q-26 0-45-19t-19-45 19-45l138-138q-148-137-349-137-134 0-250 65t-186 179q-11 17-53 117-8 23-30 23h-199q-13 0-22.500-9.500t-9.500-22.500v-7q65-268 270-434.500t480-166.500q146 0 284 55.500t245 156.500l130-129q19-19 45-19t45 19 19 45z" />
      </svg>
      <span className="ml-2 pt-[2px]">Reload</span>
    </button>
  );
}

export default function App() {
  return (
    <div className="flex h-[1050px] w-[1920px] flex-col overflow-hidden bg-white">
      <header className="shrink-0 font-['Roboto','Noto_Sans',sans-serif]">
        <TitleBar />
        <TabStrip />
        <Toolbar />
      </header>
      <div className="flex h-[945px]">
        <div className="h-[945px] w-[1908px] overflow-hidden font-['Open_Sans','Noto_Sans',sans-serif] text-[15px] leading-[21px] text-[#222]">
          <NavBar />
          <main className="px-[30px]">
            <div className="flex h-[66px] items-end justify-between border-b border-[#ddd] pb-[4px]">
              <h1 className="pb-[1px] text-[32px] font-light leading-[45px]">Map of 7 Items</h1>
              <ReloadButton />
            </div>
            <div className="mt-[21px] flex gap-[30px]">
              <ParkList />
              <MapView />
            </div>
            <h1 className="mt-[36px] h-[51px] border-b border-[#ddd] text-[32px] font-light leading-[47px] tracking-[0.080px]">Item Details</h1>
            <Details />
          </main>
        </div>
        <div className="w-3 bg-[#fdfdfd] pt-3">
          <div className="h-[892px] bg-[#bfc3c6]" />
        </div>
      </div>
    </div>
  );
}
